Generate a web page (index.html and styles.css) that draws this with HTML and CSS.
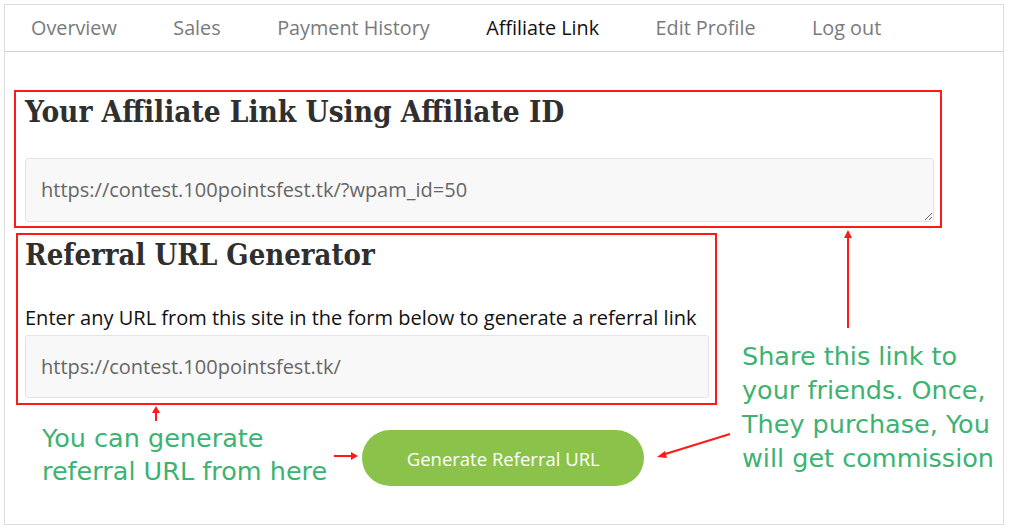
FILE: index.html
```html
<!DOCTYPE html>
<html lang="en">
<head>
<meta charset="utf-8">
<title>Affiliate Link</title>
<link rel="stylesheet" href="styles.css">
</head>
<body>
<div class="frame">
  <nav class="tabs">
    <a class="tab">Overview</a>
    <a class="tab">Sales</a>
    <a class="tab">Payment History</a>
    <a class="tab active">Affiliate Link</a>
    <a class="tab">Edit Profile</a>
    <a class="tab">Log out</a>
  </nav>
  <main class="content">
    <section class="box box-link">
      <h2 class="title">Your Affiliate Link Using Affiliate ID</h2>
      <textarea class="field textarea" readonly>https://contest.100pointsfest.tk/?wpam_id=50</textarea>
    </section>
    <section class="box box-gen">
      <h2 class="title">Referral URL Generator</h2>
      <p class="lead">Enter any URL from this site in the form below to generate a referral link</p>
      <div class="field input">https://contest.100pointsfest.tk/</div>
    </section>
    <div class="action-row">
      <p class="note note-left">You can generate<br>referral URL from here</p>
      <button class="btn">Generate Referral URL</button>
    </div>
  </main>
  <p class="note note-right">Share this link to<br>your friends. Once,<br>They purchase, You<br>will get commission</p>
  <svg class="arrows" width="1009" height="529" viewBox="0 0 1009 529">
    <g stroke="#ff1a1a" stroke-width="2" fill="none">
      <line x1="848" y1="328" x2="848" y2="233"/>
      <line x1="156" y1="421" x2="156" y2="409"/>
      <line x1="334" y1="456" x2="353" y2="456"/>
      <line x1="730" y1="434" x2="662" y2="455"/>
    </g>
    <g fill="#ff1a1a">
      <polygon points="848,230 844,238 852,238"/>
      <polygon points="156,406 152,413 160,413"/>
      <polygon points="358,456 351,452 351,460"/>
      <polygon points="657,457 665,451 667,458"/>
    </g>
  </svg>
</div>
</body>
</html>
```
FILE: styles.css
```css
html, body {
  margin: 0;
  padding: 0;
  background: #fff;
}
body {
  font-family: "Open Sans", sans-serif;
  color: #222;
}
.frame {
  position: relative;
  box-sizing: border-box;
  width: 1000px;
  height: 521px;
  margin: 4px 0 0 4px;
  border: 1px solid #dcdcdc;
}
.tabs {
  display: flex;
  gap: 56.5px;
  height: 46px;
  align-items: center;
  padding-left: 26px;
  border-bottom: 1px solid #d3d3d3;
}
.tab {
  font-size: 19.8px;
  color: #7a7a7a;
  line-height: 1;
}
.tab.active {
  color: #111;
}
.content {
  padding: 38px 0 0 9px;
}
.box {
  box-sizing: border-box;
  border: 2px solid #ff1a1a;
}
.box-link {
  width: 928px;
  height: 138px;
  padding: 0 6px 0 9px;
}
.box-gen {
  width: 701px;
  height: 172px;
  margin: 5px 0 0 2px;
  padding: 0 6px 0 7px;
}
.title {
  margin: 0;
  font-family: "DejaVu Serif", serif;
  font-stretch: condensed;
  font-weight: bold;
  font-size: 29.5px;
  color: #2f2f2f;
  line-height: 40px;
}
.box-gen .title {
  font-size: 29px;
}
.box-link .title {
  margin-bottom: 26px;
}
.box-gen .title {
  margin-bottom: 30px;
}
.field {
  display: block;
  box-sizing: border-box;
  width: 100%;
  background: #f8f8f8;
  border: 1px solid #e4e4e4;
  border-radius: 3px;
  font-family: "Open Sans", sans-serif;
  font-size: 20px;
  color: #666;
  padding: 0 15px;
}
.textarea {
  height: 64px;
  padding-top: 17px;
  resize: vertical;
  overflow: hidden;
  outline: none;
  line-height: 28px;
}
.lead {
  margin: 0 0 4px;
  font-size: 20px;
  line-height: 26px;
  color: #111;
}
.input {
  height: 63px;
  line-height: 61px;
}
.action-row {
  display: flex;
  align-items: flex-start;
  margin-top: 15px;
  padding-left: 28px;
  gap: 35px;
}
.note {
  margin: 0;
  font-family: "DejaVu Sans", sans-serif;
  font-size: 25.5px;
  line-height: 33px;
  color: #3cb371;
}
.note-left {
  margin-top: 2px;
}
.btn {
  width: 282px;
  height: 56px;
  border: 0;
  border-radius: 28px;
  background: #8bc34a;
  color: #fff;
  font-family: "Open Sans", sans-serif;
  font-size: 18.5px;
  margin-top: 10px;
  padding: 0;
}
.note-right {
  position: absolute;
  left: 737px;
  top: 334px;
  line-height: 34px;
}
.arrows {
  position: absolute;
  left: -5px;
  top: -5px;
  pointer-events: none;
}
```
